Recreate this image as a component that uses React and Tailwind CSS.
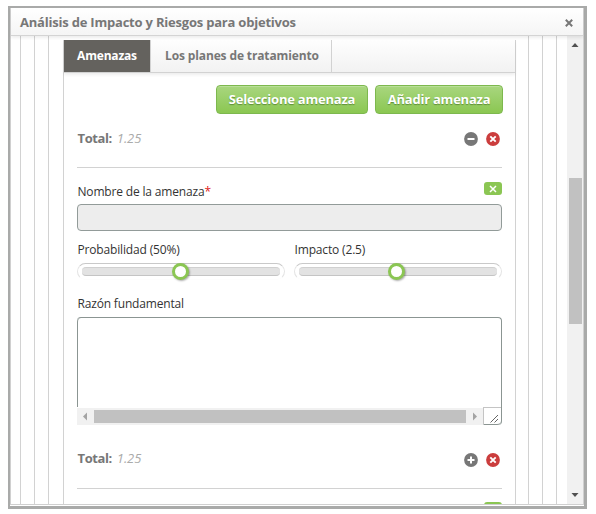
import React from 'react';

function RoundIcon({ kind }) {
  return (
    <svg width="14" height="14" viewBox="0 0 14 14" className="block">
      <circle cx="7" cy="7" r="6.9" fill={kind === 'close' ? '#cb3d3d' : '#777777'} />
      {kind === 'close' && <path d="M4.3 4.3 9.7 9.7M9.7 4.3 4.3 9.7" stroke="#fff" strokeWidth="1.9" />}
      {kind !== 'close' && <path d="M3.5 7H10.5" stroke="#fff" strokeWidth="2" />}
      {kind === 'plus' && <path d="M7 3.5V10.5" stroke="#fff" strokeWidth="2" />}
    </svg>
  );
}

function GreenButton({ children, width }) {
  return (
    <button className={`${width} h-[29px] rounded-[4px] border border-[#7db84e] bg-linear-to-b from-[#a8d67e] to-[#8bc751] text-[13px] leading-[27px] font-bold tracking-[-0.22px] text-white whitespace-nowrap shadow-[inset_0_1px_0_#b9df98] [text-shadow:0_1px_1px_#5f8f38]`}>
      {children}
    </button>
  );
}

function TotalRow({ kind }) {
  return (
    <div className="box-content flex h-[35px] items-start justify-between border-b border-[#d2d2d2]">
      <div className={`${kind === 'plus' ? '-mt-[2px]' : '-mt-px'} pl-[0.5px] text-[13px] leading-[14px] whitespace-nowrap`}>
        <span className="font-bold tracking-[-0.4px] text-[#777]">Total:</span>
        <span className="ml-[5px] tracking-[-0.1px] text-[#aaa] italic">1.25</span>
      </div>
      <div className="flex gap-2 pr-[2px]">
        <RoundIcon kind={kind} />
        <RoundIcon kind="close" />
      </div>
    </div>
  );
}

function RemoveBadge() {
  return (
    <div className="flex h-[13px] w-[18px] shrink-0 items-center justify-center rounded-[3px] bg-[#8bc653]">
      <svg width="8" height="8" viewBox="0 0 8 8">
        <path d="M1 1 7 7M7 1 1 7" stroke="#fff" strokeWidth="1.5" />
      </svg>
    </div>
  );
}

function Slider({ label, knob }) {
  return (
    <div className="w-[208px]">
      <div className="h-[22px] pl-[0.5px] text-[12px] leading-[17px] tracking-[-0.16px] whitespace-nowrap text-[#333]">{label}</div>
      <div className="flex h-[17px] items-center rounded-full border border-x-[#e4e4e4] border-t-[#c9c9c9] border-b-[#fdfdfd] bg-white px-1">
        <div className="relative h-[9px] w-full rounded-[4px] border-t border-b border-t-[#d0d0d0] border-b-[#c4c4c4] bg-[#e2e2e2]">
          <div className={`absolute top-[-5px] ${knob} h-[17px] w-[17px] rounded-full border-[3px] border-[#8bc653] bg-white shadow-[1px_1px_2px_#0005]`} />
        </div>
      </div>
    </div>
  );
}

function ThreatForm() {
  return (
    <div className="flex flex-col">
      <div className="flex h-[22px] items-start justify-between">
        <div className="mt-px pl-[0.5px] text-[12px] leading-[17px] tracking-[-0.17px] whitespace-nowrap text-[#333]">
          Nombre de la amenaza<span className="text-[#e02020]">*</span>
        </div>
        <RemoveBadge />
      </div>
      <div className="h-[27px] rounded-[4px] border border-[#929b99] bg-[#ededed]" />
      <div className="mt-[10px] flex justify-between">
        <Slider label="Probabilidad (50%)" knob="left-[90px]" />
        <Slider label="Impacto (2.5)" knob="left-[89px]" />
      </div>
      <div className="mt-[15px] h-[22px] pl-[0.5px] text-[12px] leading-[17px] tracking-[-0.17px] whitespace-nowrap text-[#333]">Razón fundamental</div>
      <div className="flex h-[108px] flex-col justify-end rounded-t-[4px] rounded-br-[4px] border border-b-0 border-l-0 border-[#8b9592] bg-white">
        <div className="flex-1 rounded-tl-[4px] border-l border-[#8b9592]" />
        <div className="flex h-[18px] items-end">
          <div className="flex h-[17px] flex-1 items-center bg-[#f1f1f1]">
            <svg width="17" height="17" viewBox="0 0 17 17"><path d="M10 4.5V12.5L6 8.5Z" fill="#a3a3a3" /></svg>
            <div className="h-[13px] flex-1 bg-[#c1c1c1]" />
            <svg width="17" height="17" viewBox="0 0 17 17"><path d="M7 4.5V12.5L11 8.5Z" fill="#a3a3a3" /></svg>
          </div>
          <div className="flex h-[18px] w-[18px] items-end justify-end rounded-br-[4px] border-t border-b border-l border-t-[#c4c4c4] border-b-[#8b9592] border-l-[#c4c4c4] pr-[2px] pb-px">
            <svg width="9" height="9" viewBox="0 0 9 9"><path d="M0.5 8.5 8 1M4.5 8.5 8 5" stroke="#666" strokeWidth="1" /></svg>
          </div>
        </div>
      </div>
    </div>
  );
}

function Threats() {
  return (
    <div className="mt-1 flex-1 border-x border-[#d2d2d2]">
      <div className="flex h-[33px] border-b border-[#d2d2d2] bg-linear-to-b from-[#fefefe] to-[#f2f2f2] text-[12px] leading-[32px] font-bold whitespace-nowrap shadow-[0_2px_3px_#00000012]">
        <div className="w-[86px] bg-[#64625e] text-center tracking-[-0.2px] text-white">Amenazas</div>
        <div className="w-[182px] border-x border-[#d2d2d2] pl-[14px] tracking-[-0.13px] text-[#777]">Los planes de tratamiento</div>
      </div>
      <div className="flex flex-col px-[13px]">
        <div className="mt-3 -mr-px flex justify-end gap-[7px]">
          <GreenButton width="w-[152px]">Seleccione amenaza</GreenButton>
          <GreenButton width="w-[128px]">Añadir amenaza</GreenButton>
        </div>
        <div className="mt-[18px]"><TotalRow kind="minus" /></div>
        <div className="mt-[14px]"><ThreatForm /></div>
        <div className="mt-[28px]"><TotalRow kind="plus" /></div>
        <div className="mt-[13px] flex justify-end"><RemoveBadge /></div>
      </div>
    </div>
  );
}

export default function App() {
  return (
    <div className="h-[514px] w-[596px] overflow-hidden bg-white pt-[6px] pl-[8px] font-['Open_Sans',sans-serif]">
      <div className="h-[503px] w-[579px] border-t-2 border-r-[3px] border-b-[3px] border-l-2 border-[#a9aaa9] bg-white pb-px">
        <div className="flex h-[497px] flex-col border-x border-b border-[#d0d0d0]">
          <div className="z-10 flex h-[28px] shrink-0 items-center justify-between border-b border-[#d4d4d4] bg-linear-to-b from-white to-[#f5f5f5] pr-[10px] pl-[9px] text-[13px] font-bold tracking-[-0.21px] whitespace-nowrap text-[#777] shadow-[0_2px_3px_#00000012]">
            <span className="mt-[2px]">Análisis de Impacto y Riesgos para objetivos</span>
            <svg width="8" height="8" viewBox="0 0 8 8" className="mt-[3px]"><path d="M0.8 0.8 7.2 7.2M7.2 0.8 0.8 7.2" stroke="#777" strokeWidth="2" /></svg>
          </div>
          <div className="flex min-h-0 flex-1 overflow-hidden">
            <div className="ml-[9px] w-[537px] shrink-0 border-x border-[#d2d2d2] px-[13px]">
              <div className="h-full border-x border-[#d2d2d2] px-[13px]">
                <div className="flex h-full border-x border-[#d2d2d2] pr-[12px] pl-[14px]">
                  <Threats />
                </div>
              </div>
            </div>
            <div className="ml-auto flex w-[16px] shrink-0 flex-col items-center bg-[#f1f1f1]">
              <svg width="16" height="17" viewBox="0 0 16 17" className="shrink-0"><path d="M4.5 11H11.5L8 7Z" fill="#505050" /></svg>
              <div className="mt-[125px] h-[146px] w-[13px] shrink-0 bg-[#c1c1c1]" />
              <svg width="16" height="17" viewBox="0 0 16 17" className="mt-auto shrink-0"><path d="M4.5 6H11.5L8 10Z" fill="#505050" /></svg>
            </div>
          </div>
        </div>
      </div>
    </div>
  );
}
